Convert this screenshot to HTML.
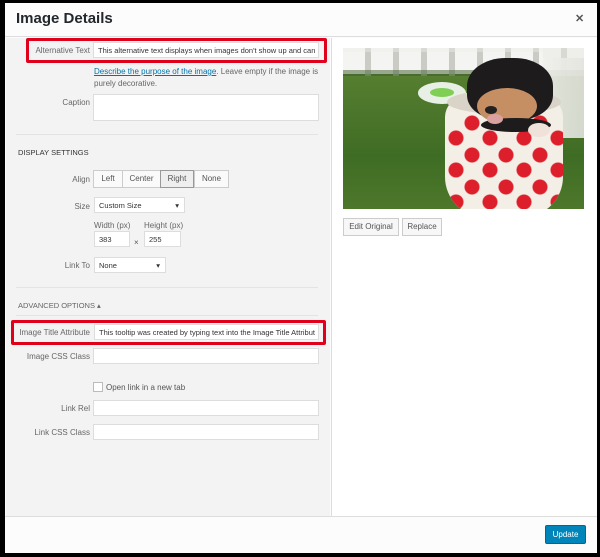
<!DOCTYPE html>
<html><head><style>
*{box-sizing:border-box;margin:0;padding:0}
body{width:600px;height:557px;background:#000;position:relative;overflow:hidden;font-family:"Liberation Sans",sans-serif;font-size:8px;color:#555}
.a{position:absolute}
.in{position:absolute;background:#fff;border:1px solid #ddd;height:16px;font-size:7.5px;color:#333;padding:3px 4px;white-space:nowrap;overflow:hidden}
.lb{position:absolute;text-align:right;width:80px;font-size:8px;color:#666}
.btn{position:absolute;border:1px solid #ccc;background:#f7f7f7;height:18px;font-size:8px;color:#555;text-align:center;line-height:16px}
.red{position:absolute;border:3px solid #e0001b;border-radius:2px}
.sep{position:absolute;left:16px;width:302px;height:1px;background:#e3e3e3}
</style></head><body>
<div class="a" style="left:5px;top:3px;width:592px;height:550px;background:#fcfcfc"></div>
<div class="a" style="left:5px;top:3px;width:592px;height:34px;background:#fcfcfc;border-bottom:1px solid #ddd"></div>
<div class="a" style="left:16px;top:10px;font-size:15px;color:#23282d;font-weight:bold">Image Details</div>
<div class="a" style="left:575px;top:12px;font-size:11px;color:#555;font-weight:bold">✕</div>
<div class="a" style="left:6px;top:38px;width:324px;height:478px;background:#f3f3f3"></div>
<div class="a" style="left:331px;top:38px;width:265px;height:478px;background:#fff;border-left:1px solid #ddd"></div>
<div class="a" style="left:5px;top:516px;width:592px;height:37px;background:#fcfcfc;border-top:1px solid #ddd"></div>

<div class="lb" style="left:10px;top:46px">Alternative Text</div>
<div class="in" style="left:93px;top:42px;width:226px">This alternative text displays when images don't show up and can b</div>
<div class="red" style="left:26px;top:38px;width:301px;height:25px"></div>
<div class="a" style="left:94px;top:66px;color:#666;line-height:12px;width:232px"><span style="color:#0073aa;text-decoration:underline">Describe the purpose of the image</span>. Leave empty if the image is purely decorative.</div>
<div class="lb" style="left:10px;top:98px">Caption</div>
<div class="in" style="left:93px;top:94px;width:226px;height:27px"></div>
<div class="sep" style="top:134px"></div>
<div class="a" style="left:18px;top:148px;font-size:7.5px;color:#333">DISPLAY SETTINGS</div>
<div class="lb" style="left:10px;top:175px">Align</div>
<div class="btn" style="left:93px;top:170px;width:30px;background:#fafafa">Left</div>
<div class="btn" style="left:122px;top:170px;width:39px;background:#fafafa">Center</div>
<div class="btn" style="left:160px;top:170px;width:34px;background:#eee;border-color:#999">Right</div>
<div class="btn" style="left:194px;top:170px;width:35px;background:#fafafa">None</div>
<div class="lb" style="left:10px;top:202px">Size</div>
<div class="in" style="left:94px;top:197px;width:91px">Custom Size<span style="position:absolute;right:5px">▾</span></div>
<div class="a" style="left:94px;top:221px;color:#666">Width (px)</div>
<div class="a" style="left:144px;top:221px;color:#666">Height (px)</div>
<div class="in" style="left:94px;top:231px;width:36px">383</div>
<div class="a" style="left:134px;top:238px">×</div>
<div class="in" style="left:144px;top:231px;width:37px">255</div>
<div class="lb" style="left:10px;top:261px">Link To</div>
<div class="in" style="left:94px;top:257px;width:72px">None<span style="position:absolute;right:5px">▾</span></div>
<div class="sep" style="top:287px"></div>
<div class="a" style="left:18px;top:301px;font-size:7.5px;color:#666">ADVANCED OPTIONS ▴</div>
<div class="sep" style="top:315px"></div>
<div class="lb" style="left:10px;top:328px">Image Title Attribute</div>
<div class="in" style="left:94px;top:324px;width:225px">This tooltip was created by typing text into the Image Title Attribut</div>
<div class="red" style="left:11px;top:320px;width:315px;height:25px"></div>
<div class="lb" style="left:10px;top:352px">Image CSS Class</div>
<div class="in" style="left:93px;top:348px;width:226px"></div>
<div class="a" style="left:93px;top:382px;width:10px;height:10px;background:#fff;border:1px solid #bbb"></div>
<div class="a" style="left:106px;top:383px;color:#555">Open link in a new tab</div>
<div class="lb" style="left:10px;top:404px">Link Rel</div>
<div class="in" style="left:93px;top:400px;width:226px"></div>
<div class="lb" style="left:10px;top:428px">Link CSS Class</div>
<div class="in" style="left:93px;top:424px;width:226px"></div>

<div class="a" style="left:343px;top:48px;width:241px;height:161px;overflow:hidden;background:#4d7a2c">
<div class="a" style="left:0;top:0;width:241px;height:30px;background:repeating-linear-gradient(90deg,#f4f4f2 0 22px,#c9cbc4 22px 28px)"></div>
<div class="a" style="left:0;top:0;width:241px;height:4px;background:#f1f1ee"></div>
<div class="a" style="left:0;top:26px;width:241px;height:135px;background:linear-gradient(#557f33,#3f6e25 60%,#4f7a2b)"></div>
<div class="a" style="left:200px;top:0;width:41px;height:40px;background:#eeeeea"></div>
<div class="a" style="left:-40px;top:0;width:241px;height:30px;"></div>
<div class="a" style="left:0;top:0;width:241px;height:30px;background:repeating-linear-gradient(90deg,transparent 0 22px,#c9cbc4 22px 28px);opacity:.6"></div>
<div class="a" style="left:0;top:22px;width:241px;height:8px;background:#3b5a2a;opacity:.5"></div>
<div class="a" style="left:0;top:28px;width:241px;height:133px;background:linear-gradient(#567e30,#3f6c24 60%,#4d782b)"></div>
<div class="a" style="left:200px;top:10px;width:41px;height:80px;background:linear-gradient(90deg,#f0f0ec,#e4e4df);opacity:.9"></div>
<div class="a" style="left:-100px;top:-100px"></div>
<div class="a" style="left:75px;top:34px;width:48px;height:22px;border-radius:50%;background:#e8efe4"></div>
<div class="a" style="left:87px;top:40px;width:24px;height:9px;border-radius:50%;background:#7fcf55"></div>
<div class="a" style="left:102px;top:49px;width:118px;height:120px;border-radius:20px 20px 40px 40px;background:#f3efe6;overflow:hidden">
 <div class="a" style="left:-6px;top:25px;width:140px;height:100px;background:radial-gradient(circle,#dc1f2b 7px,transparent 8px) 0 0/34px 32px"></div>
 <div class="a" style="left:10px;top:10px;width:140px;height:100px;background:radial-gradient(circle,#dc1f2b 7px,transparent 8px) 0 0/34px 32px"></div>
</div>
<div class="a" style="left:104px;top:42px;width:114px;height:24px;border-radius:50%;background:#d9d3c8"></div>
<div class="a" style="left:124px;top:10px;width:86px;height:62px;border-radius:45% 45% 40% 40%;background:#1e1b1c"></div>
<div class="a" style="left:134px;top:40px;width:60px;height:36px;border-radius:50%;background:#c58f63"></div>
<div class="a" style="left:142px;top:58px;width:12px;height:8px;border-radius:50%;background:#222"></div>
<div class="a" style="left:138px;top:70px;width:70px;height:14px;background:#1e1b1c;border-radius:50%"></div>
<div class="a" style="left:144px;top:66px;width:16px;height:10px;border-radius:50%;background:#d9a1a0"></div>
<div class="a" style="left:185px;top:75px;width:22px;height:14px;border-radius:50%;background:#f0e2da"></div>
</div>
<div class="btn" style="left:343px;top:218px;width:56px;background:#f7f7f7">Edit Original</div>
<div class="btn" style="left:402px;top:218px;width:40px;background:#f7f7f7">Replace</div>

<div class="a" style="left:545px;top:525px;width:41px;height:19px;background:#0085ba;border:1px solid #006799;color:#fff;font-size:8px;text-align:center;line-height:17px;border-radius:2px">Update</div>
</body></html>
